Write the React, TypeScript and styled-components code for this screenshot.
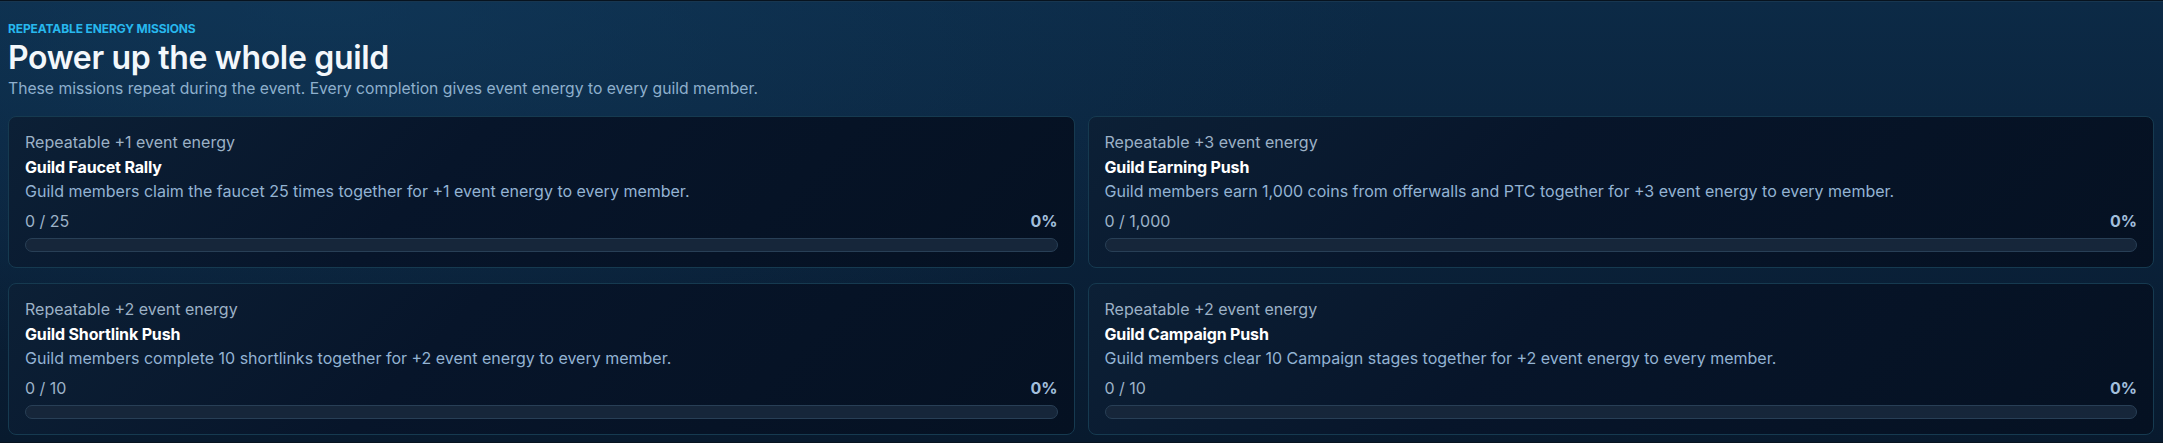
import * as React from "react";
import styled, { createGlobalStyle } from "styled-components";

const GlobalStyle = createGlobalStyle`
  html, body {
    margin: 0;
    padding: 0;
    background: #07131f;
  }
  body {
    font-family: Inter, "Noto Sans", "Liberation Sans", sans-serif;
    -webkit-font-smoothing: antialiased;
  }
`;

const Section = styled.section`
  margin-top: 1px;
  border-top: 1px solid #173650;
  background:
    radial-gradient(ellipse 70% 120% at 15% 0%, rgba(18, 62, 98, 0.55), transparent 70%),
    linear-gradient(180deg, #0c2a46 0%, #0a2139 55%, #081a2e 100%);
  padding: 19px 9px 8px 8px;
  height: 441px;
  box-sizing: border-box;
`;

const Header = styled.header`
  display: flex;
  flex-direction: column;
  gap: 4px;
  margin-bottom: 17px;
`;

const Eyebrow = styled.div`
  color: #27b8ee;
  font-size: 12px;
  line-height: 16px;
  font-weight: 700;
  text-transform: uppercase;
  letter-spacing: -0.01em;
`;

const Title = styled.h2`
  margin: 0;
  color: #f3f7fb;
  font-size: 32px;
  line-height: 34px;
  font-weight: 600;
  letter-spacing: -0.01em;
`;

const Subtitle = styled.p`
  margin: 0;
  color: #8eb0cd;
  font-size: 15.7px;
  line-height: 20px;
`;

const Grid = styled.div`
  display: grid;
  grid-template-columns: 1fr 1fr;
  gap: 15px 13px;
`;

const Card = styled.article`
  border: 1px solid #163a50;
  border-radius: 8px;
  background: linear-gradient(135deg, #0c2036 0%, #07152a 40%, #051122 100%);
  padding: 15px 16px;
  display: flex;
  flex-direction: column;
`;

const Reward = styled.div`
  color: #9cb1c6;
  font-size: 16px;
  line-height: 20px;
`;

const MissionName = styled.div`
  margin-top: 5px;
  color: #ffffff;
  font-size: 16px;
  line-height: 20px;
  font-weight: 700;
  letter-spacing: -0.01em;
`;

const Description = styled.div`
  margin-top: 4px;
  color: #93b3d3;
  font-size: 16px;
  line-height: 20px;
`;

const ProgressRow = styled.div`
  margin-top: 10px;
  display: flex;
  justify-content: space-between;
  align-items: center;
  font-size: 16px;
  line-height: 20px;
`;

const Count = styled.span`
  color: #9db3c8;
`;

const Percent = styled.span`
  color: #a2bfdc;
  font-weight: 700;
`;

const Track = styled.div`
  margin-top: 7px;
  height: 14px;
  box-sizing: border-box;
  border: 1px solid #283f56;
  border-radius: 999px;
  background: #16263a;
  overflow: hidden;
`;

const Fill = styled.div`
  height: 100%;
  background: linear-gradient(90deg, #1fb4ea, #3ad0ff);
  border-radius: 999px;
`;

type Mission = {
  energy: number;
  name: string;
  description: string;
  done: number;
  goal: number;
};

const missions: Mission[] = [
  {
    energy: 1,
    name: "Guild Faucet Rally",
    description:
      "Guild members claim the faucet 25 times together for +1 event energy to every member.",
    done: 0,
    goal: 25,
  },
  {
    energy: 3,
    name: "Guild Earning Push",
    description:
      "Guild members earn 1,000 coins from offerwalls and PTC together for +3 event energy to every member.",
    done: 0,
    goal: 1000,
  },
  {
    energy: 2,
    name: "Guild Shortlink Push",
    description:
      "Guild members complete 10 shortlinks together for +2 event energy to every member.",
    done: 0,
    goal: 10,
  },
  {
    energy: 2,
    name: "Guild Campaign Push",
    description:
      "Guild members clear 10 Campaign stages together for +2 event energy to every member.",
    done: 0,
    goal: 10,
  },
];

function MissionCard({ mission }: { mission: Mission }) {
  const pct = Math.round((mission.done / mission.goal) * 100);
  return (
    <Card>
      <Reward>Repeatable +{mission.energy} event energy</Reward>
      <MissionName>{mission.name}</MissionName>
      <Description>{mission.description}</Description>
      <ProgressRow>
        <Count>
          {mission.done.toLocaleString("en-US")} / {mission.goal.toLocaleString("en-US")}
        </Count>
        <Percent>{pct}%</Percent>
      </ProgressRow>
      <Track>
        <Fill style={{ width: `${pct}%` }} />
      </Track>
    </Card>
  );
}

export default function App() {
  return (
    <>
      <GlobalStyle />
      <Section>
        <Header>
          <Eyebrow>Repeatable energy missions</Eyebrow>
          <Title>Power up the whole guild</Title>
          <Subtitle>
            These missions repeat during the event. Every completion gives event energy to every
            guild member.
          </Subtitle>
        </Header>
        <Grid>
          {missions.map((m) => (
            <MissionCard key={m.name} mission={m} />
          ))}
        </Grid>
      </Section>
    </>
  );
}
